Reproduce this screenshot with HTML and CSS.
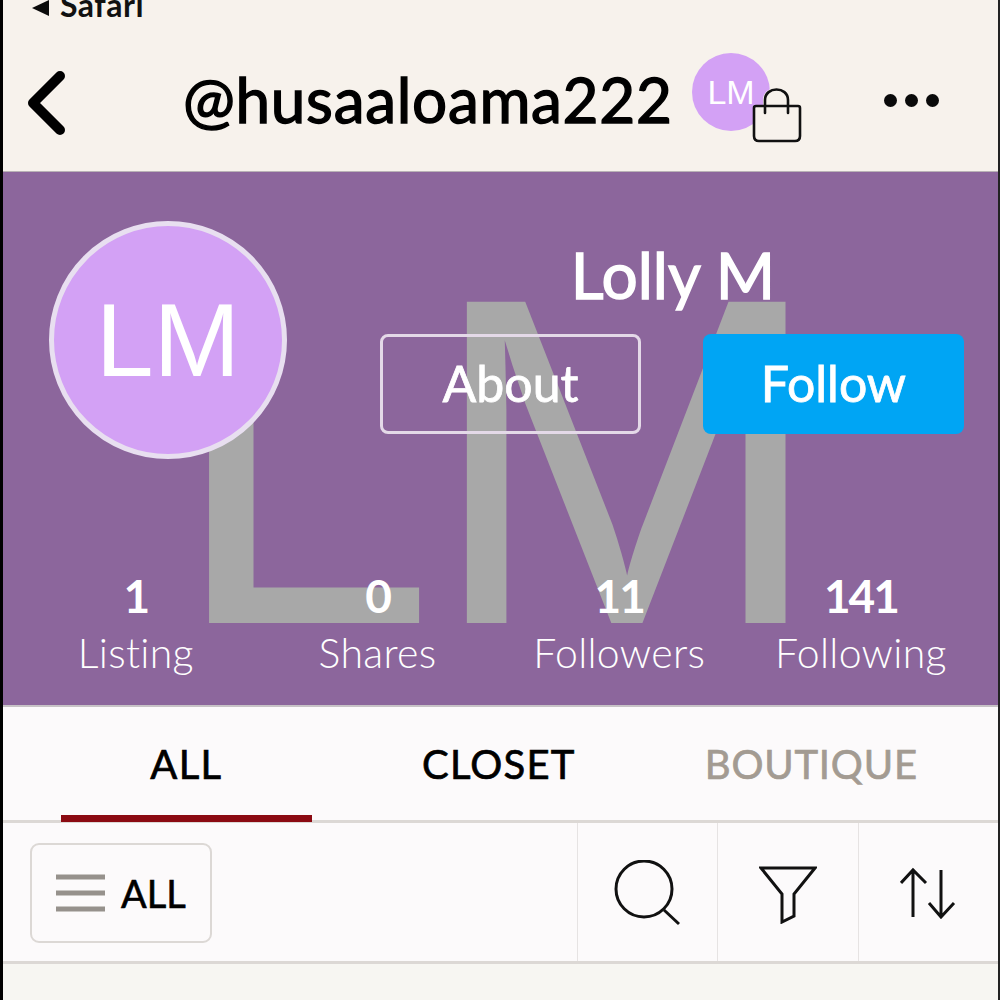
FILE: index.html
```html
<!DOCTYPE html>
<html lang="en">
<head>
<meta charset="utf-8">
<title>@husaaloama222</title>
<link rel="stylesheet" href="styles.css">
</head>
<body>
<div class="page">
  <header class="header">
    <div class="status">
      <svg class="status-tri" width="20" height="18" viewBox="0 0 20 18"><path d="M1 9 18 1V17Z" fill="#0b0b0b"/></svg>
      <span class="status-text">Safari</span>
    </div>
    <div class="nav">
      <svg class="back" width="44" height="66" viewBox="0 0 44 66"><path d="M36 6 9 33 36 60" fill="none" stroke="#000" stroke-width="10" stroke-linecap="round" stroke-linejoin="round"/></svg>
      <h1 class="handle">@husaaloama222</h1>
      <div class="mini">
        <div class="mini-avatar">LM</div>
        <svg class="bag" width="52" height="58" viewBox="0 0 52 58"><path d="M3 21Q3 20 4 20H12V14C12-2 38-2 38 14V20H47Q49 20 49 22V50Q49 55 44 55H8Q3 55 3 50Z" fill="#f7f2ec"/><path d="M5 20H47Q49 20 49 22V50Q49 55 44 55H8Q3 55 3 50V22Q3 20 5 20ZM14 27V14C14 0 37 0 37 14V27" fill="none" stroke="#111" stroke-width="2.6" stroke-linecap="round"/></svg>
      </div>
      <div class="dots"><i></i><i></i><i></i></div>
    </div>
  </header>

  <section class="hero">
    <div class="watermark">LM</div>
    <div class="hero-top">
      <div class="avatar">LM</div>
      <div class="identity">
        <div class="name">Lolly M</div>
        <div class="actions">
          <div class="btn btn-about">About</div>
          <div class="btn btn-follow">Follow</div>
        </div>
      </div>
    </div>
    <div class="stats">
      <div class="stat"><b>1</b><span>Listing</span></div>
      <div class="stat"><b>0</b><span>Shares</span></div>
      <div class="stat"><b>11</b><span>Followers</span></div>
      <div class="stat"><b>141</b><span>Following</span></div>
    </div>
  </section>

  <nav class="tabs">
    <div class="tab tab-active">ALL</div>
    <div class="tab">CLOSET</div>
    <div class="tab tab-muted">BOUTIQUE</div>
  </nav>

  <div class="toolbar">
    <div class="filter-wrap">
      <div class="filter">
        <svg width="50" height="38" viewBox="0 0 50 38"><path d="M0 3H49M0 19H49M0 35H49" stroke="#96918c" stroke-width="5"/></svg>
        <span>ALL</span>
      </div>
    </div>
    <div class="tool">
      <svg width="66" height="66" viewBox="0 0 66 66"><circle cx="30" cy="29" r="28" fill="none" stroke="#111" stroke-width="3"/><path d="M50 50 65 64" stroke="#111" stroke-width="3"/></svg>
    </div>
    <div class="tool tool-funnel">
      <svg width="58" height="58" viewBox="0 0 58 58"><path d="M2 2H56L35 28V50L23 56V28Z" fill="none" stroke="#111" stroke-width="3"/></svg>
    </div>
    <div class="tool">
      <svg width="56" height="52" viewBox="0 0 56 52"><path d="M13 50V3M1 16 13 3 26 16M41 3V50M29 36 41 50 54 36" fill="none" stroke="#111" stroke-width="3"/></svg>
    </div>
  </div>
  <div class="rest"></div>
</div>
</body>
</html>
```

FILE: styles.css
```css
* { box-sizing: border-box; }
html, body { margin: 0; padding: 0; }
body { width: 1000px; height: 1000px; overflow: hidden; background: #f7f6f2; font-family: "Lato", "Liberation Sans", sans-serif; }
.page { width: 1000px; height: 1000px; display: flex; flex-direction: column; border-left: 3px solid #000; border-right: 2px solid #222; overflow: hidden; }

.header { height: 172px; flex: none; background: #f7f2ec; border-bottom: 1px solid #b9b2b6; overflow: hidden; }
.status { height: 20px; display: flex; align-items: center; padding-left: 28px; gap: 9px; overflow: visible; }
.status-tri { margin-top: -4px; }
.status-text { font-size: 32px; font-weight: 700; color: #111; line-height: 20px; margin-top: -10px; letter-spacing: .5px; }
.nav { height: 151px; display: flex; align-items: center; padding: 15px 0 0 21px; }
.back { flex: none; }
.handle { margin: -8px 0 0 115px; font-size: 62px; font-weight: 400; -webkit-text-stroke: 1.4px #000; color: #000; letter-spacing: .7px; line-height: 1; white-space: nowrap; width: 509px; }
.mini { position: relative; width: 78px; height: 78px; flex: none; margin: -22px 0 0 0; }
.mini-avatar { width: 78px; height: 78px; border-radius: 50%; background: #d3a1f5; color: #fff; font-family: "Liberation Sans", sans-serif; font-size: 34px; display: flex; align-items: center; justify-content: center; }
.bag { position: absolute; left: 59px; top: 33px; }
.dots { display: flex; gap: 8px; margin-left: 114px; margin-top: -5px; }
.dots i { display: block; width: 13px; height: 13px; border-radius: 50%; background: #0a0a0a; }

.hero { position: relative; height: 535px; flex: none; background: #8c669c; border-bottom: 2px solid #c7c2c6; padding: 49px 34px 0 46px; display: flex; flex-direction: column; overflow: hidden; }
.watermark { position: absolute; left: 167px; top: 39px; font-family: "Liberation Sans", sans-serif; font-size: 467px; line-height: 500px; color: #a8a8a8; letter-spacing: -7px; white-space: nowrap; transform: scaleX(1.02); transform-origin: left center; }
.hero-top { position: relative; display: flex; height: 347px; }
.avatar { width: 238px; height: 238px; flex: none; border-radius: 50%; background: #d3a1f5; border: 5px solid #e8dff0; color: #fff; font-family: "Liberation Sans", sans-serif; font-size: 104px; display: flex; align-items: center; justify-content: center; }
.identity { margin-left: 93px; flex: 1; display: flex; flex-direction: column; align-items: center; padding-top: 20px; }
.name { font-size: 64px; font-weight: 400; -webkit-text-stroke: 1.4px #fff; color: #fff; line-height: 68px; margin-right: -2px; }
.actions { display: flex; justify-content: space-between; width: 100%; margin-top: 25px; }
.btn { width: 261px; height: 100px; border-radius: 8px; display: flex; align-items: center; justify-content: center; color: #fff; font-size: 50px; font-weight: 400; -webkit-text-stroke: .8px #fff; padding-bottom: 3px; }
.btn-about { border: 3px solid #e4d9e8; }
.btn-follow { background: #00a5f4; }

.stats { position: relative; display: grid; grid-template-columns: repeat(4, 241.7px); margin-left: -34px; text-align: center; }
.stat { display: flex; flex-direction: column; align-items: center; color: #fff; }
.stat b { font-size: 46px; font-weight: 700; line-height: 56px; letter-spacing: -2px; }
.stat span { font-size: 41px; line-height: 58px; font-weight: 300; letter-spacing: .3px; }

.tabs { height: 116px; flex: none; background: #fcfafb; border-bottom: 3px solid #dcd8d5; display: grid; grid-template-columns: repeat(3, 312.5px); padding-left: 27px; }
.tab { position: relative; display: flex; align-items: center; justify-content: center; font-size: 40px; font-weight: 400; -webkit-text-stroke: .7px currentColor; letter-spacing: 1.2px; color: #000; }
.tab-muted { color: #a39b92; letter-spacing: .8px; }
.tab-active::after { content: ""; position: absolute; left: 31px; right: 31px; bottom: -2px; height: 7px; background: #8b0a12; }

.toolbar { height: 141px; flex: none; background: #fcfafb; border-bottom: 3px solid #dcd8d5; display: flex; }
.filter-wrap { width: 574px; padding: 20px 0 0 27px; }
.filter { width: 182px; height: 100px; border: 2px solid #dcd8d5; border-radius: 9px; display: flex; align-items: center; gap: 15px; padding-left: 24px; font-size: 38px; -webkit-text-stroke: .6px #000; color: #000; }
.tool { width: 140.5px; border-left: 1px solid #e6e3e3; display: flex; align-items: center; justify-content: center; padding-top: 1px; }
.tool-funnel { padding-top: 6px; }
.rest { flex: 1; background: #f7f6f2; }
```
